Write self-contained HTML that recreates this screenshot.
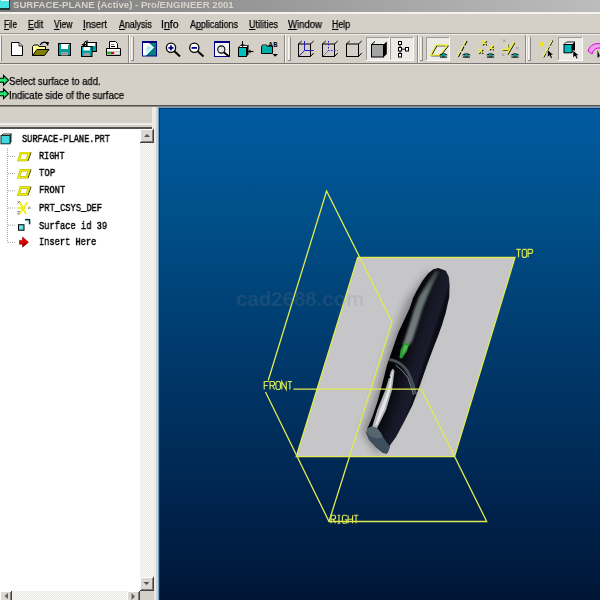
<!DOCTYPE html>
<html><head><meta charset="utf-8"><style>
*{margin:0;padding:0;box-sizing:border-box}
html,body{width:600px;height:600px;overflow:hidden;background:#d4d0c8;font-family:"Liberation Sans",sans-serif;position:relative}
.a{position:absolute}
.tx{position:absolute;white-space:nowrap;line-height:normal;transform-origin:0 0;will-change:transform;-webkit-text-stroke:0.25px currentColor}
.tx u{text-decoration:underline}
svg{position:absolute;left:0;top:0;overflow:visible}

</style></head><body>
<!-- title bar -->
<div class="a" style="left:0;top:0;width:600px;height:12px;background:linear-gradient(90deg,#7c7c7c,#bcbcbc)"></div>
<div class="a" style="left:0;top:12px;width:600px;height:2px;background:#f4f2ee"></div>
<div class="a" style="left:0;top:0;width:10px;height:9.5px;background:#1a3a3a"></div>
<div class="a" style="left:0;top:0;width:8.75px;height:8px;background:#48e4e4"></div>
<div class="a" style="left:1px;top:0;width:7.75px;height:1.2px;background:#f4f0f4"></div>
<!-- menu separator -->
<div class="a" style="left:0;top:33px;width:600px;height:1px;background:#9a9690"></div>
<div class="a" style="left:0;top:34px;width:600px;height:1px;background:#f0eeea"></div>
<!-- toolbar bottom -->
<div class="a" style="left:0;top:63px;width:600px;height:1px;background:#7a7674"></div>
<div class="a" style="left:0;top:64px;width:600px;height:1px;background:#ecEAE6"></div>
<!-- message bottom -->
<div class="a" style="left:0;top:105px;width:600px;height:1px;background:#505050"></div>
<div class="a" style="left:0;top:106px;width:600px;height:1px;background:#8c8680"></div>
<!-- left panel -->
<div class="a" style="left:0;top:123px;width:154px;height:2px;background:#eeece8"></div>
<div class="a" style="left:0;top:127px;width:154px;height:2px;background:#545250"></div>
<div class="a" style="left:0;top:129px;width:140px;height:462px;background:#fff"></div>
<div class="a" style="left:140px;top:129px;width:14px;height:462px;background:#ecebe6"></div>
<div class="a" style="left:152px;top:107px;width:4px;height:493px;background:#eceae6"></div>
<div class="a" style="left:0;top:591px;width:140px;height:9px;background:#ecebe6"></div>
<!-- viewport -->
<div class="a" style="left:158px;top:107px;width:442px;height:493px;background:#6aa0c8"></div>
<div class="a" style="left:159px;top:108px;width:441px;height:492px;background:#003a70"></div>
<div class="a" style="left:160px;top:109px;width:440px;height:491px;background:linear-gradient(#005aa0 0px,#004f88 111px,#003a6c 241px,#002a56 351px,#001a3e 461px,#001535 491px)"></div>
<svg width="600" height="600" viewBox="0 0 600 600" style="position:absolute;left:0;top:0">
<defs>
<clipPath id="vpc"><rect x="160" y="109" width="440" height="491"/></clipPath>
<filter id="blur4" x="-50%" y="-50%" width="200%" height="200%"><feGaussianBlur stdDeviation="4"/></filter>
<filter id="blur1" x="-50%" y="-50%" width="200%" height="200%"><feGaussianBlur stdDeviation="1.0"/></filter>
<linearGradient id="penbody" gradientUnits="userSpaceOnUse" x1="378" y1="400" x2="410.3" y2="410.5"><stop offset="0" stop-color="#030305"/><stop offset="0.3" stop-color="#0a0a10"/><stop offset="0.65" stop-color="#161826"/><stop offset="0.9" stop-color="#1a1c2c"/><stop offset="1" stop-color="#0c0c14"/></linearGradient>
<linearGradient id="hl" x1="0" y1="0" x2="0" y2="1">
<stop offset="0" stop-color="#343c3e"/><stop offset="0.3" stop-color="#687272"/><stop offset="1" stop-color="#788080"/>
</linearGradient>
</defs>
<g clip-path="url(#vpc)">
<!-- TOP surface grey -->
<path d="M357.7 257.5 H515 L454.5 456.7 H296.2 Z" fill="#c6c6c8"/>
<!-- watermark on grey part (darker) -->
<!-- pen shadow -->
<path d="M433 270 L411 300 L394 345 L378 400 L367 430 L383 453 L420 385 L449 285 Z" fill="#000" opacity="0.32" filter="url(#blur4)" transform="translate(-5,2)"/>
<!-- pen body -->
<path d="M438.3 267.9 L445.8 270.8 L448.75 276.7 L449.6 285 L449.2 297.5 L447.9 303 L445.8 312.5 L442 325 L437.5 337.5 L434.5 345 L427 365 L420 385 L412.5 405 L404 422 L396 437 L389.5 446 L388 452 L386.6 453.6 L383 453 L376 447 L369 439 L366.5 433 L367.3 428.5 L369 425 L373 415 L378 400 L382 385 L387 365 L394 345 L398.3 332.5 L404.2 320 L410 307.5 L413 298 L416.7 290.8 L422.5 280.8 L428.3 273.3 L433.3 269.2 Z" fill="url(#penbody)"/>
<!-- highlight stripe -->
<path d="M435.5 270.5 L439 272 L433 284 L427 297 L422 310 L419 320 L412.5 340 L409.5 345 L402.5 345 L404.5 340 L411 320 L414 310 L419 297 L427.5 283 Z" fill="url(#hl)" filter="url(#blur1)"/>
<!-- green -->
<path d="M404 343 L409.5 343.5 L407 351 L402 358.5 L399.5 358 L400.5 350 Z" fill="#2c9a34"/>
<path d="M404.5 345 L408 345.5 L405.5 351 L402 355 Z" fill="#50c050"/>
<!-- ring -->
<path d="M389 359.5 Q398 360.5 405 368 Q411 375 415.5 394" fill="none" stroke="#464e56" stroke-width="3"/>
<path d="M395.5 365 Q403 370 408 378 Q411 386 413.5 395" fill="none" stroke="#8a9298" stroke-width="0.9"/>
<!-- clip slot -->
<path d="M393 368.5 L394.5 371 L392 390 L386 410 L378.7 425 L377 428 L372 428 L372.7 425 L377.3 410 L385.3 390 L391 371 Z" fill="#b0b4b8"/>
<path d="M393 371.5 L390.3 390 L384 410 L377 425 L375.2 425 L380 410 L387.8 390 L392.2 371.5 Z" fill="#e4e6e8"/>
<circle cx="389.3" cy="377.2" r="1" fill="#000"/>
<!-- end cap -->
<path d="M367.3 428.5 L371 426.5 L377 428 L381 433 L385 440 L390 447 L388 452 L386.6 453.6 L383 453 L376 447 L369 440 L366.5 433 Z" fill="#3e4e5c"/>
<path d="M367.3 428.5 L371 426.5 L377 428 L381 433 L382 437.5 L377 438.5 L370 436 L366.8 432 Z" fill="#56666f"/>
<!-- datum lines -->
<g fill="none" stroke="#e2ea50" stroke-width="1.3">
<path d="M296.2 456.7 L357.7 257.5 H515 L454.5 456.7 Z"/>
<path d="M268.2 380.5 L326.6 191 L392 322 L329 521.5"/>
<path d="M293.5 389.2 H421.3 L486.7 521.5 H329 L265.5 392"/>
</g>
<!-- labels -->
<g fill="none" stroke="#dce850" stroke-width="1.15" stroke-linejoin="miter"><path transform="translate(516.30,249.3)" d="M0 0H4.5M2.25 0V8"/><path transform="translate(522.20,249.3)" d="M1 0H3.5L4.5 1.5V6.5L3.5 8H1L0 6.5V1.5Z"/><path transform="translate(528.10,249.3)" d="M0 8V0H3.5L4.5 1V3L3.5 4H0"/><path transform="translate(264.20,381.5)" d="M4.5 0H0V8M0 4H3.5"/><path transform="translate(270.05,381.5)" d="M0 8V0H3.5L4.5 1V3L3.5 4H0M2.2 4L4.5 8"/><path transform="translate(275.90,381.5)" d="M1 0H3.5L4.5 1.5V6.5L3.5 8H1L0 6.5V1.5Z"/><path transform="translate(281.75,381.5)" d="M0 8V0L4.5 8V0"/><path transform="translate(287.60,381.5)" d="M0 0H4.5M2.25 0V8"/><path transform="translate(331.00,515.2)" d="M0 8V0H3.5L4.5 1V3L3.5 4H0M2.2 4L4.5 8"/><path transform="translate(336.70,515.2)" d="M2.25 0V8M1 0H3.5M1 8H3.5"/><path transform="translate(342.40,515.2)" d="M4.5 1L3.5 0H1L0 1.5V6.5L1 8H3.5L4.5 7V4.5H2.5"/><path transform="translate(348.10,515.2)" d="M0 0V8M4.5 0V8M0 4H4.5"/><path transform="translate(353.80,515.2)" d="M0 0H4.5M2.25 0V8"/></g>
<!-- watermark -->
<text x="236" y="306.2" font-family="Liberation Sans" font-weight="bold" font-size="21" fill="#828282" fill-opacity="0.19" textLength="128" lengthAdjust="spacingAndGlyphs">cad2688.com</text>
</g>
</svg>

<svg width="600" height="600" viewBox="0 0 600 600" style="position:absolute;left:0;top:0">
<!-- toolbar grip left -->
<rect x="0" y="36" width="1" height="25" fill="#f4f2ee"/><rect x="1" y="36" width="1" height="25" fill="#8c8884"/>
<!-- separators -->
<g fill="#8c8884">
<rect x="128" y="35" width="1" height="28"/><rect x="284" y="35" width="1" height="28"/><rect x="417" y="35" width="1" height="28"/><rect x="525" y="35" width="1" height="28"/>
</g>
<g fill="#f8f6f2">
<rect x="129" y="35" width="1" height="28"/><rect x="285" y="35" width="1" height="28"/><rect x="418" y="35" width="1" height="28"/><rect x="526" y="35" width="1" height="28"/>
<rect x="131" y="37" width="1" height="23"/><rect x="288" y="37" width="1" height="23"/><rect x="420" y="37" width="1" height="23"/><rect x="528" y="37" width="1" height="23"/>
</g>
<g fill="#e6e4e0">
<rect x="132" y="37" width="1" height="23"/><rect x="289" y="37" width="1" height="23"/><rect x="421" y="37" width="1" height="23"/><rect x="529" y="37" width="1" height="23"/>
</g>
<g fill="#8c8884">
<rect x="133" y="37" width="1" height="24"/><rect x="290" y="37" width="1" height="24"/><rect x="422" y="37" width="1" height="24"/><rect x="530" y="37" width="1" height="24"/>
<rect x="131" y="60" width="3" height="1"/><rect x="288" y="60" width="3" height="1"/><rect x="420" y="60" width="3" height="1"/><rect x="528" y="60" width="3" height="1"/>
</g>
<!-- pressed buttons -->
<g>
<rect x="366" y="37" width="24" height="24" fill="#fbfaf8"/><rect x="367" y="38" width="22" height="22" fill="#eceae6"/><rect x="366" y="37" width="23" height="1" fill="#a09c98"/><rect x="366" y="37" width="1" height="23" fill="#a09c98"/>
<rect x="390" y="37" width="24" height="24" fill="#fbfaf8"/><rect x="391" y="38" width="22" height="22" fill="#eceae6"/><rect x="390" y="37" width="23" height="1" fill="#a09c98"/><rect x="390" y="37" width="1" height="23" fill="#a09c98"/>
<rect x="426" y="37" width="24" height="24" fill="#fbfaf8"/><rect x="427" y="38" width="22" height="22" fill="#eceae6"/><rect x="426" y="37" width="23" height="1" fill="#a09c98"/><rect x="426" y="37" width="1" height="23" fill="#a09c98"/>
<rect x="558" y="37" width="25" height="24" fill="#fbfaf8"/><rect x="559" y="38" width="23" height="22" fill="#eceae6"/><rect x="558" y="37" width="24" height="1" fill="#a09c98"/><rect x="558" y="37" width="1" height="23" fill="#a09c98"/>
</g>
<!-- 1 new -->
<path d="M11.5 42.5 H19 L22.5 46 V55.5 H11.5 Z" fill="#fff" stroke="#000"/>
<path d="M19 42.5 V46 H22.5" fill="#d4d0c8" stroke="#000" stroke-width="0.8"/>
<!-- 2 open -->
<path d="M32.5 55.5 V46.5 L34 45 H38 L39 46.5 H45.5 V49" fill="#ffff80" stroke="#000"/>
<path d="M32.5 55.5 L37 49.5 H49 L44.5 55.5 Z" fill="#808000" stroke="#000"/>
<path d="M40 45 Q43 40.5 47 43" fill="none" stroke="#000" stroke-width="1.2"/><path d="M45 42 L49 42 L48 46 Z" fill="#000"/>
<!-- 3 save -->
<rect x="58.5" y="43.5" width="12" height="12" fill="#00a0a0" stroke="#000"/>
<rect x="61" y="44" width="7" height="5" fill="#fff"/><rect x="68" y="44" width="1" height="1" fill="#fff"/>
<rect x="61" y="52" width="7" height="3.5" fill="#9c9c9c"/>
<!-- 4 save copy -->
<rect x="86.5" y="42.5" width="10" height="9" fill="#00a0a0" stroke="#000"/>
<rect x="88" y="43" width="7" height="3" fill="#fff"/>
<rect x="81.5" y="46.5" width="10.5" height="10" fill="#00a0a0" stroke="#000"/>
<rect x="83.5" y="47" width="6.5" height="3.5" fill="#fff"/><rect x="83.5" y="53" width="6.5" height="3" fill="#9c9c9c"/>
<path d="M84 45 Q84 41 88 41" fill="none" stroke="#000" stroke-width="1.2"/><path d="M81.5 44 L86.5 44 L84 47 Z" fill="#000"/>
<!-- 5 print -->
<path d="M109.5 48.5 V41.5 H115.5 L117.5 43.5 V48.5" fill="#fff" stroke="#000"/>
<rect x="111" y="46" width="4" height="1" fill="#000"/><rect x="111" y="44" width="3" height="1" fill="#808080"/>
<path d="M106.5 48.5 H120.5 V55.5 H106.5 Z" fill="#c0c0c0" stroke="#000"/>
<rect x="107" y="49" width="13" height="2" fill="#fff"/>
<rect x="107.5" y="52" width="3" height="2" fill="#00c000"/><rect x="111" y="52" width="3" height="2" fill="#e00000"/><rect x="114.5" y="52" width="5" height="2" fill="#e8e8e8"/>
<!-- 6 repaint -->
<rect x="142" y="41" width="15" height="15.5" fill="#000080"/>
<rect x="143" y="43" width="13" height="12.5" fill="#008080"/>
<path d="M143 43 H149 L154 47.5 L146 55.5 H143 Z" fill="#fff"/>
<path d="M147 46 L152 47.5 L146 53 Z" fill="#a0f0f0"/>
<!-- 7 zoom in -->
<circle cx="171" cy="47.8" r="4.6" fill="#fff" stroke="#000" stroke-width="1.3"/>
<path d="M174.2 51 L180 56.5" stroke="#000" stroke-width="2"/>
<rect x="168.5" y="47" width="5" height="1.8" fill="#0000a0"/><rect x="170.1" y="45.3" width="1.8" height="5" fill="#0000a0"/>
<!-- 8 zoom out -->
<circle cx="194.3" cy="47.8" r="4.6" fill="#fff" stroke="#000" stroke-width="1.3"/>
<path d="M197.5 51 L203.5 56.5" stroke="#000" stroke-width="2"/>
<rect x="191.6" y="47" width="5.4" height="1.8" fill="#0000a0"/>
<!-- 9 refit -->
<rect x="214" y="41" width="16" height="16" fill="#000080"/>
<rect x="215" y="43" width="14" height="13" fill="#f4f4f4"/>
<circle cx="221.3" cy="49.5" r="3.6" fill="#e4e4e4" stroke="#000" stroke-width="1.1"/>
<path d="M223.8 52.2 L229 56.5" stroke="#000" stroke-width="1.8"/>
<!-- 10 orient -->
<path d="M238.5 47.5 L240.5 45.5 H248.5 L246.5 47.5 Z" fill="#fff" stroke="#000" stroke-width="0.8"/>
<path d="M246.5 47.5 L248.5 45.5 V54.5 L246.5 56.5 Z" fill="#000"/>
<rect x="238.5" y="47.5" width="8" height="9" fill="#00c0c0" stroke="#000"/>
<path d="M242.5 41 V46" stroke="#000" stroke-width="1"/><path d="M240.5 44.5 H244.5 L242.5 47 Z" fill="#000"/>
<path d="M249 51.5 H253.5" stroke="#000" stroke-width="1"/><path d="M250.5 49.5 V53.5 L248 51.5 Z" fill="#000"/>
<!-- 11 saved views -->
<path d="M261.5 53.5 V46.5 L263 44.5 H266 L267 46 H272.5 V53.5 Z" fill="#00b0a8" stroke="#000"/>
<path d="M263 44.5 H266" stroke="#806060" stroke-width="1"/>
<text x="268.5" y="46.8" font-family="Liberation Mono" font-size="7" font-weight="bold" fill="#000" textLength="9">AB</text>
<path d="M272.5 54 H278 L275.2 56.8 Z" fill="#000"/>
<!-- 12 wireframe -->
<g stroke="#000" fill="none" stroke-width="1">
<rect x="298.5" y="44" width="12" height="12.5"/>
<path d="M298.5 44 L301.7 41 M310.5 44 L313.7 41 M310.5 56.5 L313.7 53"/>
</g>
<g stroke="#2020c0" fill="none" stroke-width="1">
<path d="M304.5 41 V50.5 H313.7 M304.5 50.5 L298.8 56.3"/>
</g>
<!-- 13 hidden -->
<g stroke="#000" fill="none" stroke-width="1">
<rect x="322.5" y="44" width="12" height="12.5"/>
<path d="M322.5 44 L325.7 41 M334.5 44 L337.7 41 M334.5 56.5 L337.7 53"/>
</g>
<g stroke="#2020c0" fill="none" stroke-width="1" stroke-dasharray="1.5 1.5">
<path d="M328.5 41 V50.5 H337.7 M328.5 50.5 L322.8 56.3"/>
</g>
<!-- 14 no hidden -->
<g stroke="#000" fill="none" stroke-width="1">
<rect x="346.5" y="44" width="12" height="12.5"/>
<path d="M346.5 44 L349.7 41 M358.5 44 L361.7 41 M358.5 56.5 L361.7 53"/>
</g>
<!-- 15 shaded -->
<path d="M371.5 44.5 L375 41.5" stroke="#000"/>
<path d="M383.5 44.5 L386.8 41.5 V54 L383.5 57.2 Z" fill="#000"/>
<rect x="371.5" y="44.5" width="12" height="12.5" fill="#a4a4a4" stroke="#000"/>
<!-- 16 model tree -->
<g fill="#fff" stroke="#000" stroke-width="1">
<rect x="398.5" y="41.5" width="3" height="3"/><rect x="398.5" y="47.5" width="3" height="3.5"/><rect x="398.5" y="53.5" width="3" height="3.5"/><rect x="405.5" y="47.5" width="3" height="3.5"/>
</g>
<path d="M400 44.5 V47.5 M400 51 V53.5 M401.5 49.2 H405.5" stroke="#000" stroke-width="1"/>
<!-- 17 datum planes -->
<path d="M436.8 45.8 H448.3 L440.8 55.8 H431.3 Z" fill="none" stroke="#000" stroke-width="1"/>
<path d="M436 45 H447.5 L440 55 H430.5 Z" fill="none" stroke="#f0f040" stroke-width="1.3"/>
<g transform="translate(443.5,55)"><path d="M-4.5 0.3 Q0 -3.6 4.5 0.3 Z" fill="#000"/><circle cx="0" cy="0.4" r="1.9" fill="#009c9c"/><path d="M-3.6 2.1 H3.6" stroke="#000" stroke-width="1.1"/></g>
<!-- 18 axes -->
<path d="M467 41 L458 57.5" stroke="#000" stroke-width="1.2" stroke-dasharray="5 1.5"/>
<path d="M466 40.5 L457 57" stroke="#f4f460" stroke-width="1.3" stroke-dasharray="5 1.5"/>
<g transform="translate(466.4,55)"><path d="M-4.5 0.3 Q0 -3.6 4.5 0.3 Z" fill="#000"/><circle cx="0" cy="0.4" r="1.9" fill="#009c9c"/><path d="M-3.6 2.1 H3.6" stroke="#000" stroke-width="1.1"/></g>
<!-- 19 points -->
<g stroke="#000" stroke-width="1.2" transform="translate(0.8,0.8)">
<path d="M482 40.5 L486 44.5 M486 40.5 L482 44.5"/>
<path d="M478.5 49 L482.5 53 M482.5 49 L478.5 53"/>
<path d="M489 45.5 L493 49.5 M493 45.5 L489 49.5"/>
</g>
<g stroke="#f0f040" stroke-width="1.5">
<path d="M482 40.5 L486 44.5 M486 40.5 L482 44.5"/>
<path d="M478.5 49 L482.5 53 M482.5 49 L478.5 53"/>
<path d="M489 45.5 L493 49.5 M493 45.5 L489 49.5"/>
</g>
<g transform="translate(490.5,55)"><path d="M-4.5 0.3 Q0 -3.6 4.5 0.3 Z" fill="#000"/><circle cx="0" cy="0.4" r="1.9" fill="#009c9c"/><path d="M-3.6 2.1 H3.6" stroke="#000" stroke-width="1.1"/></g>
<!-- 20 csys -->
<g stroke="#a0a0a0" stroke-width="1"><path d="M503 39.5 L505.5 42 M505.5 39.5 L503 42 M502 53.5 L504.5 56 M504.5 53.5 L502 56 M516 47 L518.5 49.5 M518.5 47 L516 49.5"/></g>
<g stroke="#000" stroke-width="1.1" fill="none" transform="translate(0.8,0.8)"><path d="M502 49.5 H508 M507 43.5 L508.5 49.5 M514 42 L507 54"/></g><g stroke="#f0f040" stroke-width="1.5" fill="none"><path d="M502 49.5 H508 M507 43.5 L508.5 49.5 M514 42 L507 54"/></g>
<g transform="translate(515,55)"><path d="M-4.5 0.3 Q0 -3.6 4.5 0.3 Z" fill="#000"/><circle cx="0" cy="0.4" r="1.9" fill="#009c9c"/><path d="M-3.6 2.1 H3.6" stroke="#000" stroke-width="1.1"/></g>
<!-- 21 select datum -->
<g stroke="#e8e800" stroke-width="1.6"><path d="M540 42.5 L543.5 46 M543.5 42.5 L540 46"/></g>
<path d="M552.8 40.5 L543.6 57.5" stroke="#000" stroke-width="1.1" stroke-dasharray="6 1.5"/><path d="M552 40.2 L542.8 57.2" stroke="#f4f460" stroke-width="1.3" stroke-dasharray="6 1.5"/>
<path d="M547.5 49.5 V57.5 L549.5 55.5 L551 58.5 L552.5 57.8 L551.2 55 H553.5 Z" fill="#000" stroke="#fff" stroke-width="0.5"/>
<!-- 22 select part -->
<path d="M564 44.5 L566.5 42 H575 L572.5 44.5 Z" fill="#fff" stroke="#000" stroke-width="0.9"/>
<path d="M572 44.5 L575 42 V50 L572 53 Z" fill="#000"/>
<rect x="564" y="44.5" width="8" height="8.3" fill="#00b8b8" stroke="#000"/>
<path d="M573 50.2 V58 L575 56 L576.5 59 L578 58.3 L576.7 55.5 H579 Z" fill="#000" stroke="#fff" stroke-width="0.5"/>
<!-- 23 magenta -->
<path d="M588 51 Q590 44 598 43.5 L601 44 V48 Q594 47 592 54 Z" fill="#f0a0f0" stroke="#e000e0" stroke-width="1"/>
<path d="M597.5 50 V58 L599.5 56 L601 59 Z" fill="#000"/>
<defs><pattern id="chk" width="2" height="2" patternUnits="userSpaceOnUse"><rect width="2" height="2" fill="#e8e6e1"/><rect width="1" height="1" fill="#fafaf8"/><rect x="1" y="1" width="1" height="1" fill="#fafaf8"/></pattern></defs>
<rect x="140" y="129" width="14" height="462" fill="url(#chk)"/>
<rect x="0" y="591" width="140" height="9" fill="url(#chk)"/>
<rect x="140" y="129" width="14" height="14" fill="#404040"/><rect x="140" y="129" width="13" height="13" fill="#fff"/><rect x="141" y="130" width="12" height="12" fill="#808080"/><rect x="141" y="130" width="11" height="11" fill="#dcd8d0"/>
<path d="M144 137 L147 134 L150 137 Z" fill="#505050"/>
<rect x="140" y="577" width="14" height="14" fill="#404040"/><rect x="140" y="577" width="13" height="13" fill="#fff"/><rect x="141" y="578" width="12" height="12" fill="#808080"/><rect x="141" y="578" width="11" height="11" fill="#dcd8d0"/>
<path d="M143.5 582 L149.5 582 L146.5 585 Z" fill="#505050"/>
<rect x="140" y="591" width="14" height="9" fill="#d4d0c8"/><rect x="139" y="591" width="1" height="9" fill="#404040"/>
<rect x="0" y="591" width="12" height="12" fill="#404040"/><rect x="0" y="591" width="11" height="11" fill="#fff"/><rect x="1" y="592" width="10" height="10" fill="#808080"/><rect x="1" y="592" width="9" height="9" fill="#dcd8d0"/>
<path d="M8 593 L4.5 596 L8 599 Z" fill="#606060"/>
<rect x="127" y="591" width="13" height="12" fill="#404040"/><rect x="127" y="591" width="12" height="11" fill="#fff"/><rect x="128" y="592" width="11" height="10" fill="#808080"/><rect x="128" y="592" width="10" height="9" fill="#dcd8d0"/>
<path d="M131.5 593 L135 596.5 L131.5 600 Z" fill="#606060"/>
<path d="M1.5 135.5 L3 134 H11.5 L9.8 135.5 Z" fill="#f0f0f0" stroke="#000" stroke-width="0.8"/>
<path d="M9.5 135.5 L11.5 134 V142 L9.5 144 Z" fill="#103030"/>
<rect x="1" y="135.5" width="9" height="8.3" fill="#40d8e0" stroke="#103030" stroke-width="1"/>
<path d="M7.5 148 V242.5" stroke="#a8a8a8" stroke-width="1" stroke-dasharray="1 1"/>
<path d="M8 156.4 H16" stroke="#a8a8a8" stroke-width="1" stroke-dasharray="1 1"/>
<path d="M8 173.6 H16" stroke="#a8a8a8" stroke-width="1" stroke-dasharray="1 1"/>
<path d="M8 190.8 H16" stroke="#a8a8a8" stroke-width="1" stroke-dasharray="1 1"/>
<path d="M8 208.0 H16" stroke="#a8a8a8" stroke-width="1" stroke-dasharray="1 1"/>
<path d="M8 225.2 H16" stroke="#a8a8a8" stroke-width="1" stroke-dasharray="1 1"/>
<path d="M8 242.4 H16" stroke="#a8a8a8" stroke-width="1" stroke-dasharray="1 1"/>
<g stroke="#808080" stroke-width="0.9" fill="none"><path d="M17.5 201.0 L20 203.5 M20 201.0 L17.5 203.5"/><path d="M17.5 211.5 H20 L17.5 214.0 H20"/><path d="M28 206.5 L30.5 209.0 M30.5 206.5 L28 209.0"/></g>
<g stroke="#f0f000" stroke-width="1.6" fill="none"><path d="M17 208.0 H26 M19.5 202.0 L26 214.0 M27.5 202.0 L19.5 214.0"/></g>
<rect x="18.5" y="224.7" width="5.5" height="5.5" fill="#60e0e8" stroke="#000" stroke-width="1"/>
<path d="M25 219.7 H29.5 V224.2" fill="none" stroke="#006060" stroke-width="1.4"/><path d="M25 219.4 H29.8 V224.2" fill="none" stroke="#000" stroke-width="0.6"/>
<path d="M24.5 224.7 L28 221.2" stroke="#a0a0a0" stroke-width="0.8" stroke-dasharray="1 1"/>
<path d="M19.5 240.4 H22.5 V237 L28.5 242.2 L22.5 247.2 V244.2 H19.5 Z" fill="#e80000" stroke="#700000" stroke-width="0.6"/><path d="M23 243.5 L28 242.4 L23 246.5 Z" fill="#900000"/>
<g transform="translate(0,0.00)"><path d="M31 152.4 L27.9 161" stroke="#303000" stroke-width="1"/><path d="M20.8 153.1 H29.1 L26.7 160.1 H18.6 Z" fill="#fff" stroke="#a8a800" stroke-width="2.4"/><path d="M20.8 153.1 H29.1 L26.7 160.1 H18.6 Z" fill="none" stroke="#f0f000" stroke-width="1.5"/></g>
<g transform="translate(0,17.20)"><path d="M31 152.4 L27.9 161" stroke="#303000" stroke-width="1"/><path d="M20.8 153.1 H29.1 L26.7 160.1 H18.6 Z" fill="#fff" stroke="#a8a800" stroke-width="2.4"/><path d="M20.8 153.1 H29.1 L26.7 160.1 H18.6 Z" fill="none" stroke="#f0f000" stroke-width="1.5"/></g>
<g transform="translate(0,34.40)"><path d="M31 152.4 L27.9 161" stroke="#303000" stroke-width="1"/><path d="M20.8 153.1 H29.1 L26.7 160.1 H18.6 Z" fill="#fff" stroke="#a8a800" stroke-width="2.4"/><path d="M20.8 153.1 H29.1 L26.7 160.1 H18.6 Z" fill="none" stroke="#f0f000" stroke-width="1.5"/></g>
<!-- msg arrows --><path d="M-1 78.25 H3.5 V75.25 L8.5 80.25 L3.5 85.25 V82.25 H-1 Z" fill="#20e870" stroke="#000" stroke-width="1.1" stroke-linejoin="miter"/><path d="M-1 91.75 H3.5 V88.75 L8.5 93.75 L3.5 98.75 V95.75 H-1 Z" fill="#20e870" stroke="#000" stroke-width="1.1" stroke-linejoin="miter"/>
</svg>

<div class="tx" style="left:12.63px;top:0.30px;font:bold 9px 'Liberation Sans';color:#d8d4cc;transform:scaleX(1.0660);-webkit-text-stroke:0">SURFACE-PLANE (Active) - Pro/ENGINEER 2001</div>
<div class="tx" style="left:4.00px;top:19.00px;font:10px 'Liberation Sans';color:#000;transform:scaleX(0.8125)"><u>F</u>ile</div>
<div class="tx" style="left:28.00px;top:19.00px;font:10px 'Liberation Sans';color:#000;transform:scaleX(0.8824)"><u>E</u>dit</div>
<div class="tx" style="left:54.00px;top:19.00px;font:10px 'Liberation Sans';color:#000;transform:scaleX(0.8571)"><u>V</u>iew</div>
<div class="tx" style="left:83.00px;top:19.00px;font:10px 'Liberation Sans';color:#000;transform:scaleX(0.9600)"><u>I</u>nsert</div>
<div class="tx" style="left:118.50px;top:19.00px;font:10px 'Liberation Sans';color:#000;transform:scaleX(0.8784)"><u>A</u>nalysis</div>
<div class="tx" style="left:161.45px;top:19.00px;font:10px 'Liberation Sans';color:#000;transform:scaleX(1.0533)">I<u>n</u>fo</div>
<div class="tx" style="left:190.00px;top:19.00px;font:10px 'Liberation Sans';color:#000;transform:scaleX(0.8889)">A<u>p</u>plications</div>
<div class="tx" style="left:249.00px;top:19.00px;font:10px 'Liberation Sans';color:#000;transform:scaleX(0.8969)"><u>U</u>tilities</div>
<div class="tx" style="left:288.30px;top:19.00px;font:10px 'Liberation Sans';color:#000;transform:scaleX(0.9543)"><u>W</u>indow</div>
<div class="tx" style="left:331.70px;top:19.00px;font:10px 'Liberation Sans';color:#000;transform:scaleX(0.8800)"><u>H</u>elp</div>
<div class="tx" style="left:8.80px;top:76.00px;font:10px 'Liberation Sans';color:#000;transform:scaleX(0.9468)">Select surface to add.</div>
<div class="tx" style="left:9.04px;top:89.60px;font:10px 'Liberation Sans';color:#000;transform:scaleX(0.9619)">Indicate side of the surface</div>
<div class="tx" style="left:22.22px;top:133.00px;font:11px 'Liberation Mono';color:#000;transform:scaleX(0.7838);-webkit-text-stroke:0.45px #000">SURFACE-PLANE.PRT</div>
<div class="tx" style="left:39.23px;top:150.00px;font:11px 'Liberation Mono';color:#000;transform:scaleX(0.7719);-webkit-text-stroke:0.45px #000">RIGHT</div>
<div class="tx" style="left:39.18px;top:167.30px;font:11px 'Liberation Mono';color:#000;transform:scaleX(0.8167);-webkit-text-stroke:0.45px #000">TOP</div>
<div class="tx" style="left:39.21px;top:184.00px;font:11px 'Liberation Mono';color:#000;transform:scaleX(0.7906);-webkit-text-stroke:0.45px #000">FRONT</div>
<div class="tx" style="left:39.20px;top:202.00px;font:11px 'Liberation Mono';color:#000;transform:scaleX(0.7961);-webkit-text-stroke:0.45px #000">PRT_CSYS_DEF</div>
<div class="tx" style="left:39.21px;top:220.30px;font:11px 'Liberation Mono';color:#000;transform:scaleX(0.7940);-webkit-text-stroke:0.45px #000">Surface id 39</div>
<div class="tx" style="left:39.21px;top:236.00px;font:11px 'Liberation Mono';color:#000;transform:scaleX(0.7887);-webkit-text-stroke:0.45px #000">Insert Here</div>

</body></html>
